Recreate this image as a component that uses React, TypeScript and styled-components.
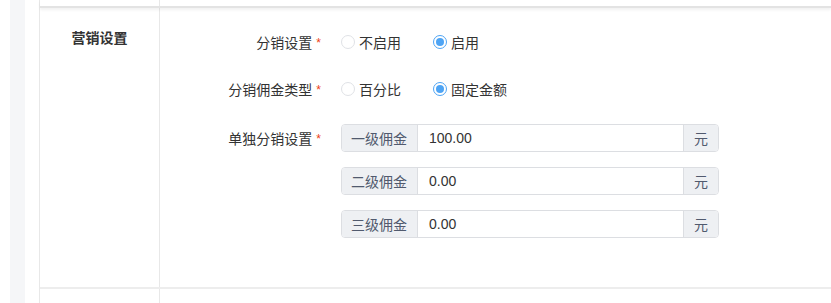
import React from "react";
import styled, { createGlobalStyle } from "styled-components";

const Global = createGlobalStyle`
  html, body { margin: 0; padding: 0; background: #fff; }
  body {
    font-family: "Liberation Sans", "Noto Sans CJK SC", sans-serif;
    font-size: 14px;
    color: #333;
  }
`;

const Page = styled.div`
  display: flex;
  height: 303px;
  overflow: hidden;
  background: #fff;
`;

const Gutter = styled.div`
  width: 10px;
  flex: none;
`;

const SideStrip = styled.div`
  width: 15px;
  flex: none;
  background: #f5f6f8;
`;

const Spacer = styled.div`
  width: 14px;
  flex: none;
`;

const Table = styled.div`
  flex: 1;
  display: flex;
  flex-direction: column;
  border-left: 1px solid #e8e8e8;
`;

const Row = styled.div<{ $h?: number; $top?: boolean }>`
  display: flex;
  flex: none;
  ${(p) => (p.$h ? `height: ${p.$h}px;` : "")}
  ${(p) =>
    p.$top
      ? `border-bottom: 2px solid #e3e3e3; box-shadow: 0 2px 3px rgba(0,0,0,0.06); position: relative; z-index: 1;`
      : ""}
`;

const MainRow = styled.div`
  display: flex;
  flex: none;
  height: 279px;
  border-bottom: 2px solid #ededed;
`;

const LabelCell = styled.div`
  width: 119px;
  flex: none;
  border-right: 1px solid #e8e8e8;
  display: flex;
  justify-content: center;
  align-items: flex-start;
`;

const SectionTitle = styled.div`
  margin-top: 21px;
  font-size: 14px;
  font-weight: bold;
  color: #333;
  line-height: 18px;
`;

const ContentCell = styled.div`
  flex: 1;
  padding-top: 20px;
  display: flex;
  flex-direction: column;
`;

const FormItem = styled.div<{ $mb: number }>`
  display: flex;
  align-items: flex-start;
  margin-bottom: ${(p) => p.$mb}px;
`;

const FormLabel = styled.div`
  width: 161px;
  flex: none;
  height: 28px;
  display: flex;
  align-items: center;
  justify-content: flex-end;
  font-size: 14px;
  color: #333;
`;

const Required = styled.span`
  color: #ed4014;
  margin-left: 4px;
  font-size: 12px;
  line-height: 1;
  position: relative;
  top: 1px;
`;

const Controls = styled.div`
  margin-left: 20px;
  display: flex;
  flex-direction: column;
  gap: 15px;
`;

const RadioGroup = styled.div`
  display: flex;
  align-items: center;
  height: 28px;
  gap: 32px;
`;

const RadioLabel = styled.label`
  display: flex;
  align-items: center;
  gap: 4px;
  font-size: 14px;
  color: #333;
`;

const RadioCircle = styled.span<{ $checked?: boolean }>`
  width: 14px;
  height: 14px;
  box-sizing: border-box;
  border-radius: 50%;
  border: 1px solid ${(p) => (p.$checked ? "#4ea4f4" : "#e0e2e6")};
  display: flex;
  align-items: center;
  justify-content: center;
  background: #fff;
  &::after {
    content: "";
    width: 8px;
    height: 8px;
    border-radius: 50%;
    background: ${(p) => (p.$checked ? "#4ea4f4" : "transparent")};
  }
`;

const InputGroup = styled.div`
  display: flex;
  width: 378px;
  height: 28px;
  box-sizing: border-box;
  border: 1px solid #dcdee2;
  border-radius: 4px;
  overflow: hidden;
`;

const Addon = styled.div<{ $side: "left" | "right" }>`
  flex: none;
  display: flex;
  align-items: center;
  padding: ${(p) => (p.$side === "left" ? "0 10px 0 9px" : "0 10px")};
  background: #eef0f3;
  color: #515a6e;
  font-size: 14px;
  ${(p) =>
    p.$side === "left"
      ? "border-right: 1px solid #dcdee2;"
      : "border-left: 1px solid #dcdee2;"}
`;

const Value = styled.div`
  flex: 1;
  display: flex;
  align-items: center;
  padding-left: 11px;
  color: #333;
  font-size: 14px;
`;

const radioRows = [
  { label: "分销设置", options: ["不启用", "启用"], checked: 1 },
  { label: "分销佣金类型", options: ["百分比", "固定金额"], checked: 1 },
];

const levels = [
  { name: "一级佣金", value: "100.00" },
  { name: "二级佣金", value: "0.00" },
  { name: "三级佣金", value: "0.00" },
];

export default function App() {
  return (
    <>
      <Global />
      <Page>
        <Gutter />
        <SideStrip />
        <Spacer />
        <Table>
          <Row $h={6} $top>
            <LabelCell />
          </Row>
          <MainRow>
            <LabelCell>
              <SectionTitle>营销设置</SectionTitle>
            </LabelCell>
            <ContentCell>
              {radioRows.map((r, i) => (
                <FormItem key={r.label} $mb={i === 0 ? 19 : 21}>
                  <FormLabel>
                    {r.label}
                    <Required>*</Required>
                  </FormLabel>
                  <Controls>
                    <RadioGroup>
                      {r.options.map((o, j) => (
                        <RadioLabel key={o}>
                          <RadioCircle $checked={j === r.checked} />
                          {o}
                        </RadioLabel>
                      ))}
                    </RadioGroup>
                  </Controls>
                </FormItem>
              ))}
              <FormItem $mb={0}>
                <FormLabel>
                  单独分销设置
                  <Required>*</Required>
                </FormLabel>
                <Controls>
                  {levels.map((l) => (
                    <InputGroup key={l.name}>
                      <Addon $side="left">{l.name}</Addon>
                      <Value>{l.value}</Value>
                      <Addon $side="right">元</Addon>
                    </InputGroup>
                  ))}
                </Controls>
              </FormItem>
            </ContentCell>
          </MainRow>
          <Row $h={20}>
            <LabelCell />
          </Row>
        </Table>
      </Page>
    </>
  );
}
